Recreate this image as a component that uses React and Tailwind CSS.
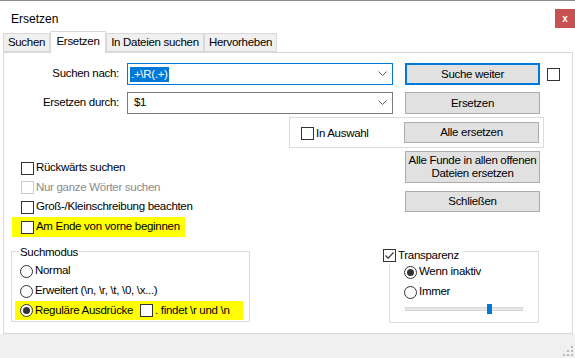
import React from 'react';

const font = { fontFamily: '"Liberation Sans", Arial, sans-serif' };

function Check({ checked = false, disabled = false }) {
  return (
    <span
      className={`flex h-[13px] w-[13px] shrink-0 items-center justify-center border bg-white ${
        disabled ? 'border-[#cccccc]' : 'border-[#333333]'
      }`}
    >
      {checked && (
        <svg width="11" height="11" viewBox="0 0 11 11" fill="none" stroke="#333" strokeWidth="1.2">
          <path d="M1.5 5.5 L4.2 8.2 L9.5 2.5" />
        </svg>
      )}
    </span>
  );
}

function Radio({ checked = false }) {
  return (
    <span className="flex h-[13px] w-[13px] shrink-0 items-center justify-center rounded-full border border-[#333333] bg-white">
      {checked && <span className="h-[7px] w-[7px] rounded-full bg-[#333333]" />}
    </span>
  );
}

function Chevron() {
  return (
    <svg width="9" height="6" viewBox="0 0 9 6" fill="none" stroke="#5f5f5f" strokeWidth="1">
      <path d="M0.5 0.5 L4.5 4.5 L8.5 0.5" />
    </svg>
  );
}

function Button({ children, focused = false, className = '' }) {
  return (
    <div
      className={`flex w-[135px] shrink-0 items-center justify-center bg-[#e1e1e1] text-center leading-[13px] text-black ${
        focused ? 'border-2 border-[#0078d7]' : 'border border-[#adadad]'
      } ${className}`}
    >
      {children}
    </div>
  );
}

function Combo({ focused = false, children }) {
  return (
    <div
      className={`flex h-[22px] w-[266px] items-center justify-between border bg-white pl-[2px] pr-[5px] ${
        focused ? 'border-[#0078d7]' : 'border-[#7a7a7a]'
      }`}
    >
      <div className="flex items-center">{children}</div>
      <Chevron />
    </div>
  );
}

function Tab({ label, width, active = false }) {
  if (active) {
    return (
      <div className={`relative z-10 -mb-px flex h-[22px] items-center justify-center border border-b-0 border-[#d9d9d9] bg-white pb-[1px] ${width}`}>
        {label}
      </div>
    );
  }
  return (
    <div className={`flex h-[19px] items-center justify-center border border-[#d9d9d9] bg-[#f0f0f0] ${width}`}>
      {label}
    </div>
  );
}

export default function App() {
  return (
    <div
      className="flex h-[358px] w-[575px] flex-col overflow-hidden border-t border-[#8c8c8c] bg-white text-[11.5px] tracking-[-0.3px] text-black"
      style={font}
    >
      {/* Title bar */}
      <div className="flex h-[30px] shrink-0 items-start justify-between">
        <span className="mt-[9px] ml-[11px] text-[12px] tracking-normal">Ersetzen</span>
        <div className="mt-[8px] flex h-[19px] w-[20px] items-center justify-center bg-[#c75050] text-[10px] font-bold leading-none tracking-normal text-white">
          x
        </div>
      </div>

      {/* Tabs */}
      <div className="ml-[3px] flex items-end">
        <Tab label="Suchen" width="w-[47px]" />
        <Tab label="Ersetzen" width="w-[56px]" active />
        <Tab label="In Dateien suchen" width="w-[98px]" />
        <Tab label="Hervorheben" width="w-[73px]" />
      </div>

      {/* Tab panel */}
      <div className="mx-[3px] flex h-[282px] w-[570px] shrink-0 flex-col border border-[#d9d9d9] bg-white">
        {/* Row 1 */}
        <div className="mt-[10px] flex items-center">
          <span className="w-[115px] text-right">Suchen nach:</span>
          <div className="ml-[8px]">
            <Combo focused>
              <span className="bg-[#0078d7] px-[1px] leading-[15px] text-white">.+\R(.+)</span>
            </Combo>
          </div>
          <Button focused className="ml-[12px] h-[22px]">Suche weiter</Button>
          <span className="ml-[7px]">
            <Check />
          </span>
        </div>

        {/* Row 2 */}
        <div className="mt-[7px] flex items-center">
          <span className="w-[115px] text-right">Ersetzen durch:</span>
          <div className="ml-[8px]">
            <Combo>
              <span className="pl-[4px]">$1</span>
            </Combo>
          </div>
          <Button className="ml-[12px] h-[22px]">Ersetzen</Button>
        </div>

        {/* In Auswahl group */}
        <div className="mt-[3px] ml-[285px] flex h-[31px] w-[255px] items-center border border-[#dcdcdc] pl-[11px]">
          <div className="flex w-[103px] items-center gap-[2px] self-start pt-[7px]">
            <Check />
            <span>In Auswahl</span>
          </div>
          <Button className="h-[21px]">Alle ersetzen</Button>
        </div>

        {/* Options + action buttons */}
        <div className="mt-[3px] flex items-start">
          <div className="flex w-[401px] flex-col pt-[7px]">
            <div className="ml-[8px] flex h-[20px] items-center gap-[2px] pl-[9px]">
              <Check />
              <span>Rückwärts suchen</span>
            </div>
            <div className="ml-[8px] flex h-[19px] items-center gap-[2px] pl-[9px] text-[#8a8a8a]">
              <Check disabled />
              <span>Nur ganze Wörter suchen</span>
            </div>
            <div className="ml-[8px] flex h-[20px] items-center gap-[2px] pl-[9px]">
              <Check />
              <span>Groß-/Kleinschreibung beachten</span>
            </div>
            <div className="ml-[8px] flex h-[20px] w-[173px] items-center gap-[2px] bg-[#ffff00] pl-[9px]">
              <Check />
              <span>Am Ende von vorne beginnen</span>
            </div>
          </div>
          <div className="flex flex-col gap-[8px]">
            <Button className="h-[32px]">
              Alle Funde in allen offenen
              <br />
              Dateien ersetzen
            </Button>
            <Button className="h-[21px]">Schließen</Button>
          </div>
        </div>

        {/* Bottom groups */}
        <div className="mt-[14px] flex items-start">
          {/* Suchmodus */}
          <div className="relative ml-[7px] flex h-[71px] w-[239px] flex-col border border-[#dcdcdc] pt-[9px]">
            <span className="absolute -top-[8px] left-[7px] bg-white px-[1px]">Suchmodus</span>
            <div className="flex h-[20px] items-center gap-[2px] pl-[8px]">
              <Radio />
              <span>Normal</span>
            </div>
            <div className="flex h-[20px] items-center gap-[2px] pl-[8px]">
              <Radio />
              <span>Erweitert (\n, \r, \t, \0, \x...)</span>
            </div>
            <div className="ml-[3px] flex h-[19px] w-[228px] items-center bg-[#ffff00] pl-[5px]">
              <Radio checked />
              <span className="ml-[2px] w-[105px]">Reguläre Ausdrücke</span>
              <Check />
              <span className="ml-[2px]">. findet \r und \n</span>
            </div>
          </div>

          {/* Transparenz */}
          <div className="relative ml-[139px] flex h-[72px] w-[150px] flex-col border border-[#dcdcdc] pt-[10px]">
            <div className="absolute -top-[5px] -left-[7px] flex items-center gap-[2px] bg-white pr-[4px]">
              <Check checked />
              <span>Transparenz</span>
            </div>
            <div className="flex h-[20px] items-center gap-[2px] pl-[14px]">
              <Radio checked />
              <span>Wenn inaktiv</span>
            </div>
            <div className="flex h-[20px] items-center gap-[2px] pl-[14px]">
              <Radio />
              <span>Immer</span>
            </div>
            <div className="relative mt-[5px] ml-[15px] h-[4px] w-[118px] border border-[#d6d6d6] bg-[#e7e7e7]">
              <span className="absolute -top-[4px] left-[81px] h-[10px] w-[5px] bg-[#0078d7]" />
            </div>
          </div>
        </div>
      </div>

      {/* Bottom strip */}
      <div className="flex flex-1 items-end justify-end bg-[#f0f0f0] pr-[2px] pb-[2px]">
        <svg width="10" height="10" viewBox="0 0 10 10" fill="#b8b8b8">
          <rect x="8" y="0" width="2" height="2" />
          <rect x="4" y="4" width="2" height="2" />
          <rect x="8" y="4" width="2" height="2" />
          <rect x="0" y="8" width="2" height="2" />
          <rect x="4" y="8" width="2" height="2" />
          <rect x="8" y="8" width="2" height="2" />
        </svg>
      </div>
    </div>
  );
}
